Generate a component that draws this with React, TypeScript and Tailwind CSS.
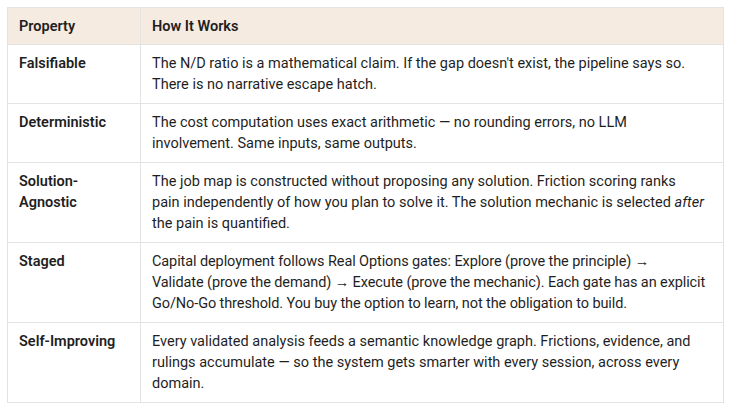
import React from 'react';

interface Row {
  property: string;
  how: React.ReactNode;
  tight?: boolean;
}

const rows: Row[] = [
  {
    property: 'Falsifiable',
    how: "The N/D ratio is a mathematical claim. If the gap doesn't exist, the pipeline says so. There is no narrative escape hatch.",
  },
  {
    property: 'Deterministic',
    how: 'The cost computation uses exact arithmetic — no rounding errors, no LLM involvement. Same inputs, same outputs.',
  },
  {
    property: 'Solution-Agnostic',
    how: (
      <>
        The job map is constructed without proposing any solution. Friction scoring ranks
        <br />
        pain independently of how you plan to solve it. The solution mechanic is selected <em>after</em> the pain is
        quantified.
      </>
    ),
  },
  {
    property: 'Staged',
    how: (
      <>
        Capital deployment follows Real Options gates: Explore (prove the principle) →
        <br />
        Validate (prove the demand) → Execute (prove the mechanic). Each gate has an explicit
        <br />
        Go/No-Go threshold. You buy the option to learn, not the obligation to build.
      </>
    ),
    tight: true,
  },
  {
    property: 'Self-Improving',
    how: 'Every validated analysis feeds a semantic knowledge graph. Frictions, evidence, and rulings accumulate — so the system gets smarter with every session, across every domain.',
  },
];

export default function App() {
  return (
    <div className="w-[731px] h-[406px] bg-white pt-[7px] pl-[7px] font-['Roboto','Liberation_Sans',sans-serif] text-[14.5px] leading-[21px] text-[#1f1f1f]">
      <table className="w-[717px] table-fixed border-collapse border border-[#e3e3e3]">
        <colgroup>
          <col className="w-[133px]" />
          <col />
        </colgroup>
        <thead>
          <tr className="bg-[#f6ebe0]">
            <th className="h-[37px] border border-[#e3e3e3] px-[11px] text-left font-semibold">Property</th>
            <th className="h-[37px] border border-[#e3e3e3] px-[11px] text-left font-semibold">How It Works</th>
          </tr>
        </thead>
        <tbody>
          {rows.map((row, i) => (
            <tr key={i}>
              <td className="align-top border border-[#e3e3e3] px-[11px] pt-[8px] pb-[8px] font-semibold">{row.property}</td>
              <td
                className={`align-top border border-[#e3e3e3] px-[11px] pt-[8px] pb-[8px] ${
                  row.tight ? 'tracking-[-0.1px]' : ''
                }`}
              >
                {row.how}
              </td>
            </tr>
          ))}
        </tbody>
      </table>
    </div>
  );
}
